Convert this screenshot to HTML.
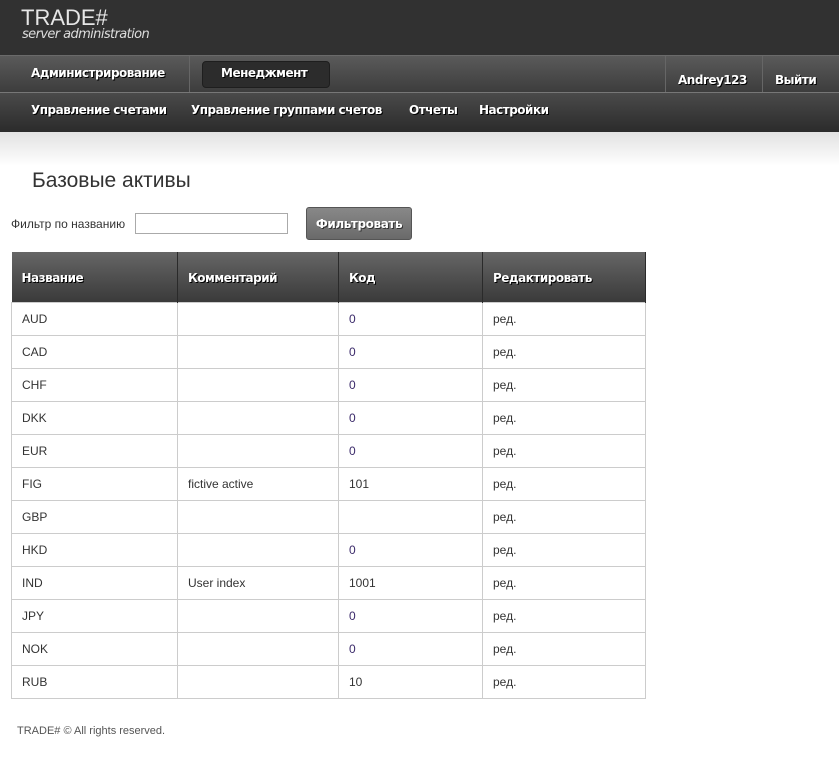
<!DOCTYPE html>
<html><head><meta charset="utf-8"><style>
*{margin:0;padding:0;box-sizing:border-box}
body{width:839px;height:757px;background:#fff;font-family:"Liberation Sans",sans-serif;position:relative;overflow:hidden}
.hdr{position:absolute;left:0;top:0;width:839px;height:55px;background:#313131}
.logo{position:absolute;left:21px;top:5px;color:#e6e6e6;font-size:22px}
.sub{position:absolute;left:22px;top:27px;color:#ddd;font-size:13px;font-style:italic;font-family:"DejaVu Sans",sans-serif;letter-spacing:-.6px}
.n1{position:absolute;left:0;top:55px;width:839px;height:38px;background:linear-gradient(#5a5a5a,#3d3d3d);border-top:1px solid #6a6a6a;border-bottom:1px solid #777}
.n2{position:absolute;left:0;top:93px;width:839px;height:39px;background:linear-gradient(#4a4a4a,#2b2b2b)}
.t{position:absolute;color:#fff;font-weight:bold;font-size:12px;font-family:"DejaVu Sans",sans-serif;letter-spacing:-.5px;text-shadow:1px 1px 0 #000}
.btn{position:absolute;left:202px;top:61px;width:128px;height:27px;background:#2c2c2c;border:1px solid #1e1e1e;border-radius:4px}
.sep{position:absolute;top:56px;width:1px;height:36px;background:#333;border-right:1px solid #666}
.shadow{position:absolute;left:0;top:132px;width:839px;height:34px;background:linear-gradient(#e2e2e2,#fff)}
h1{position:absolute;left:32px;top:169px;font-weight:normal;font-size:21px;color:#333}
.lbl{position:absolute;left:11px;top:217px;font-size:12px;color:#333}
.inp{position:absolute;left:135px;top:213px;width:153px;height:21px;border:1px solid #aaa}
.fb{position:absolute;left:306px;top:207px;width:106px;height:33px;background:linear-gradient(#888,#6a6a6a);border:1px solid #555;border-radius:3px;color:#fff;font-weight:bold;font-size:12px;font-family:"DejaVu Sans",sans-serif;letter-spacing:-.4px;text-align:center;line-height:33px;text-shadow:1px 1px 0 #333}
table{position:absolute;left:11px;top:252px;width:635px;border-collapse:collapse;font-size:12px;color:#333}
th{height:50px;background:linear-gradient(#666,#3a3a3a);color:#fff;text-align:left;padding-left:10px;padding-top:2px;font-family:"DejaVu Sans",sans-serif;font-size:12px;letter-spacing:-.5px;border-right:1px solid #2a2a2a;text-shadow:1px 1px 0 #000}
td{height:33px;padding-left:10px;border:1px solid #ccc}
td.c{color:#3b2a6a}
.ft{position:absolute;left:17px;top:725px;font-size:11px;color:#555}
</style></head><body>
<div class="hdr"><div class="logo">TRADE#</div><div class="sub">server administration</div></div>
<div class="n1"></div>
<div class="sep" style="left:189px"></div>
<div class="sep" style="left:665px"></div>
<div class="sep" style="left:762px"></div>
<div class="btn"></div>
<div class="t" style="left:31px;top:66px">Администрирование</div>
<div class="t" style="left:221px;top:66px">Менеджмент</div>
<div class="t" style="left:678px;top:73px">Andrey123</div>
<div class="t" style="left:775px;top:73px">Выйти</div>
<div class="n2"></div>
<div class="t" style="left:31px;top:103px">Управление счетами</div>
<div class="t" style="left:191px;top:103px">Управление группами счетов</div>
<div class="t" style="left:409px;top:103px">Отчеты</div>
<div class="t" style="left:479px;top:103px">Настройки</div>
<div class="shadow"></div>
<h1>Базовые активы</h1>
<div class="lbl">Фильтр по названию</div>
<div class="inp"></div>
<div class="fb">Фильтровать</div>
<table>
<tr><th style="width:166px">Название</th><th style="width:161px">Комментарий</th><th style="width:144px">Код</th><th>Редактировать</th></tr>
<tr><td>AUD</td><td></td><td class="c">0</td><td>ред.</td></tr>
<tr><td>CAD</td><td></td><td class="c">0</td><td>ред.</td></tr>
<tr><td>CHF</td><td></td><td class="c">0</td><td>ред.</td></tr>
<tr><td>DKK</td><td></td><td class="c">0</td><td>ред.</td></tr>
<tr><td>EUR</td><td></td><td class="c">0</td><td>ред.</td></tr>
<tr><td>FIG</td><td>fictive active</td><td>101</td><td>ред.</td></tr>
<tr><td>GBP</td><td></td><td></td><td>ред.</td></tr>
<tr><td>HKD</td><td></td><td class="c">0</td><td>ред.</td></tr>
<tr><td>IND</td><td>User index</td><td>1001</td><td>ред.</td></tr>
<tr><td>JPY</td><td></td><td class="c">0</td><td>ред.</td></tr>
<tr><td>NOK</td><td></td><td class="c">0</td><td>ред.</td></tr>
<tr><td>RUB</td><td></td><td>10</td><td>ред.</td></tr>
</table>
<div class="ft">TRADE# © All rights reserved.</div>
</body></html>
